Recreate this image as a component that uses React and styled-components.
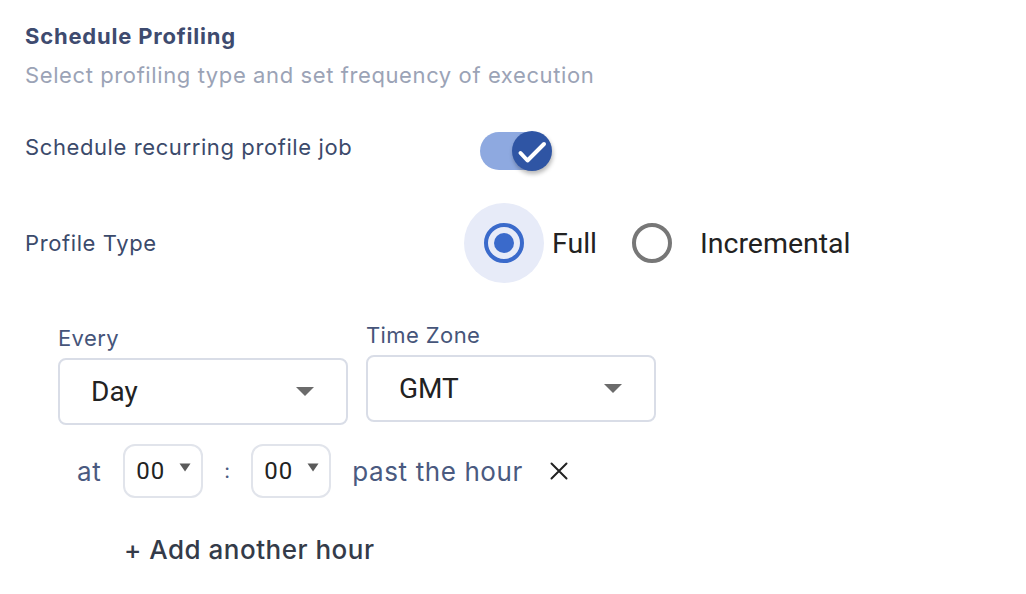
import styled, { createGlobalStyle } from 'styled-components';

const GlobalStyle = createGlobalStyle`
  html, body {
    margin: 0;
    padding: 0;
    background: #fff;
  }
  body {
    font-family: Inter, "Noto Sans", sans-serif;
    letter-spacing: 0.5px;
  }
`;

const CheckIcon = () => (
  <svg width="40" height="40" viewBox="0 0 40 40">
    <path d="M8.5 22l7 7.5L32 13" fill="none" stroke="#fff" strokeWidth="4" strokeLinecap="round" strokeLinejoin="round" />
  </svg>
);

const Caret = ({ small }) =>
  small ? (
    <svg width="12" height="9" viewBox="0 0 12 9">
      <path d="M0.5 0.5h11L6 8.5z" fill="#5a5a5a" />
    </svg>
  ) : (
    <svg width="18" height="9" viewBox="0 0 18 9">
      <path d="M0 0h18L9 9z" fill="#6b6b6b" />
    </svg>
  );

const App = () => {
  return (
    <>
      <GlobalStyle />
      <Wrapper>
        <Title>Schedule Profiling</Title>
        <Subtitle>Select profiling type and set frequency of execution</Subtitle>

        <Row className="toggle-row">
          <Label raise={4}>Schedule recurring profile job</Label>
          <Switch>
            <span className="track" />
            <span className="knob">
              <CheckIcon />
            </span>
          </Switch>
        </Row>

        <Row className="radio-row">
          <Label>Profile Type</Label>
          <RadioGroup>
            <RadioOption>
              <Radio checked />
              <span>Full</span>
            </RadioOption>
            <RadioOption>
              <Radio />
              <span>Incremental</span>
            </RadioOption>
          </RadioGroup>
        </Row>

        <Schedule>
          <Fields>
            <Field offset={3}>
              <FieldLabel>Every</FieldLabel>
              <Select>
                <span>Day</span>
                <Caret />
              </Select>
            </Field>
            <Field>
              <FieldLabel>Time Zone</FieldLabel>
              <Select>
                <span>GMT</span>
                <Caret />
              </Select>
            </Field>
          </Fields>

          <AtRow>
            <InlineText>at</InlineText>
            <SmallSelect>
              <span>00</span>
              <Caret small />
            </SmallSelect>
            <Colon>:</Colon>
            <SmallSelect>
              <span>00</span>
              <Caret small />
            </SmallSelect>
            <InlineText lead>past the hour</InlineText>
            <Remove>
              <svg width="18" height="18" viewBox="0 0 18 18">
                <path d="M1.5 1.5l15 15M16.5 1.5l-15 15" stroke="#222" strokeWidth="2" strokeLinecap="round" />
              </svg>
            </Remove>
          </AtRow>

          <AddHour>+ Add another hour</AddHour>
        </Schedule>
      </Wrapper>
    </>
  );
};

const Wrapper = styled.main`
  padding: 21px 25px;
  color: #3b4a6b;
`;

const Title = styled.h2`
  margin: 0;
  font-size: 22px;
  line-height: 30px;
  font-weight: 700;
  letter-spacing: 0.8px;
  color: #3e4b6f;
`;

const Subtitle = styled.p`
  margin: 9px 0 0;
  font-size: 22px;
  line-height: 30px;
  letter-spacing: 0.6px;
  color: #9ba3b6;
`;

const Row = styled.div`
  display: grid;
  grid-template-columns: 439px auto;
  align-items: center;
  &.toggle-row {
    margin-top: 39px;
    height: 44px;
  }
  &.radio-row {
    margin-top: 30px;
    height: 80px;
  }
`;

const Label = styled.span`
  font-size: 22px;
  letter-spacing: 0.6px;
  color: #3b4a6b;
  padding-bottom: ${(p) => (p.raise || 0) * 2}px;
`;

const Switch = styled.div`
  position: relative;
  width: 90px;
  height: 44px;
  .track {
    position: absolute;
    left: 16px;
    top: 3px;
    width: 66px;
    height: 38px;
    border-radius: 19px;
    background: #8ea9e0;
  }
  .knob {
    position: absolute;
    left: 48px;
    top: 2px;
    width: 40px;
    height: 40px;
    border-radius: 50%;
    background: #2f55a4;
    box-shadow: 1px 3px 4px rgba(0, 0, 0, 0.28);
    display: flex;
    align-items: center;
    justify-content: center;
  }
`;

const RadioGroup = styled.div`
  display: flex;
  align-items: center;
`;

const RadioOption = styled.label`
  display: flex;
  align-items: center;
  font-family: Roboto, sans-serif;
  font-size: 28.5px;
  letter-spacing: 0;
  color: #222;
  & + & {
    margin-left: 15px;
  }
  span:last-child {
    margin-left: 8px;
  }
`;

const Radio = styled.span`
  position: relative;
  width: 80px;
  height: 80px;
  border-radius: 50%;
  background: ${(p) => (p.checked ? '#e7ebf8' : 'transparent')};
  display: flex;
  align-items: center;
  justify-content: center;
  &::before {
    content: '';
    width: 32px;
    height: 32px;
    border-radius: 50%;
    border: 4px solid ${(p) => (p.checked ? '#3a6acb' : '#777')};
  }
  &::after {
    content: '';
    display: ${(p) => (p.checked ? 'block' : 'none')};
    position: absolute;
    width: 20px;
    height: 20px;
    border-radius: 50%;
    background: #3a6acb;
  }
`;

const Schedule = styled.section`
  margin-top: 37px;
  padding-left: 33px;
`;

const Fields = styled.div`
  display: flex;
  gap: 18px;
`;

const Field = styled.div`
  display: flex;
  flex-direction: column;
  width: 290px;
  margin-top: ${(p) => p.offset || 0}px;
`;

const FieldLabel = styled.span`
  font-size: 22px;
  line-height: 30px;
  letter-spacing: 0.4px;
  color: #46557a;
  margin-bottom: 5px;
`;

const Select = styled.div`
  box-sizing: border-box;
  height: 67px;
  border: 2px solid #d9dde7;
  border-radius: 8px;
  display: flex;
  align-items: center;
  justify-content: space-between;
  padding: 0 32px 0 31px;
  font-family: Roboto, sans-serif;
  font-size: 28px;
  letter-spacing: 0;
  color: #222;
`;

const AtRow = styled.div`
  display: flex;
  align-items: center;
  margin-top: 19px;
  padding-left: 19px;
  height: 54px;
`;

const InlineText = styled.span`
  font-size: 26px;
  letter-spacing: 0.6px;
  color: #4a5a80;
  margin-right: ${(p) => (p.lead ? '27px' : '22px')};
  margin-left: ${(p) => (p.lead ? '21px' : '0')};
`;

const SmallSelect = styled.div`
  box-sizing: border-box;
  width: 80px;
  height: 54px;
  border: 2px solid #e1e4eb;
  border-radius: 12px;
  display: flex;
  align-items: center;
  padding: 0 0 0 11px;
  font-family: Roboto, sans-serif;
  font-size: 24px;
  letter-spacing: 1px;
  color: #222;
  span {
    margin-right: 14px;
  }
  svg {
    margin-top: -8px;
  }
`;

const Colon = styled.span`
  width: 48px;
  text-align: center;
  font-size: 20px;
  color: #4a5a80;
`;

const Remove = styled.span`
  display: flex;
`;

const AddHour = styled.div`
  margin-top: 36px;
  padding-left: 66px;
  font-size: 26px;
  font-weight: 500;
  letter-spacing: 0.5px;
  color: #343b49;
`;

export default App;
